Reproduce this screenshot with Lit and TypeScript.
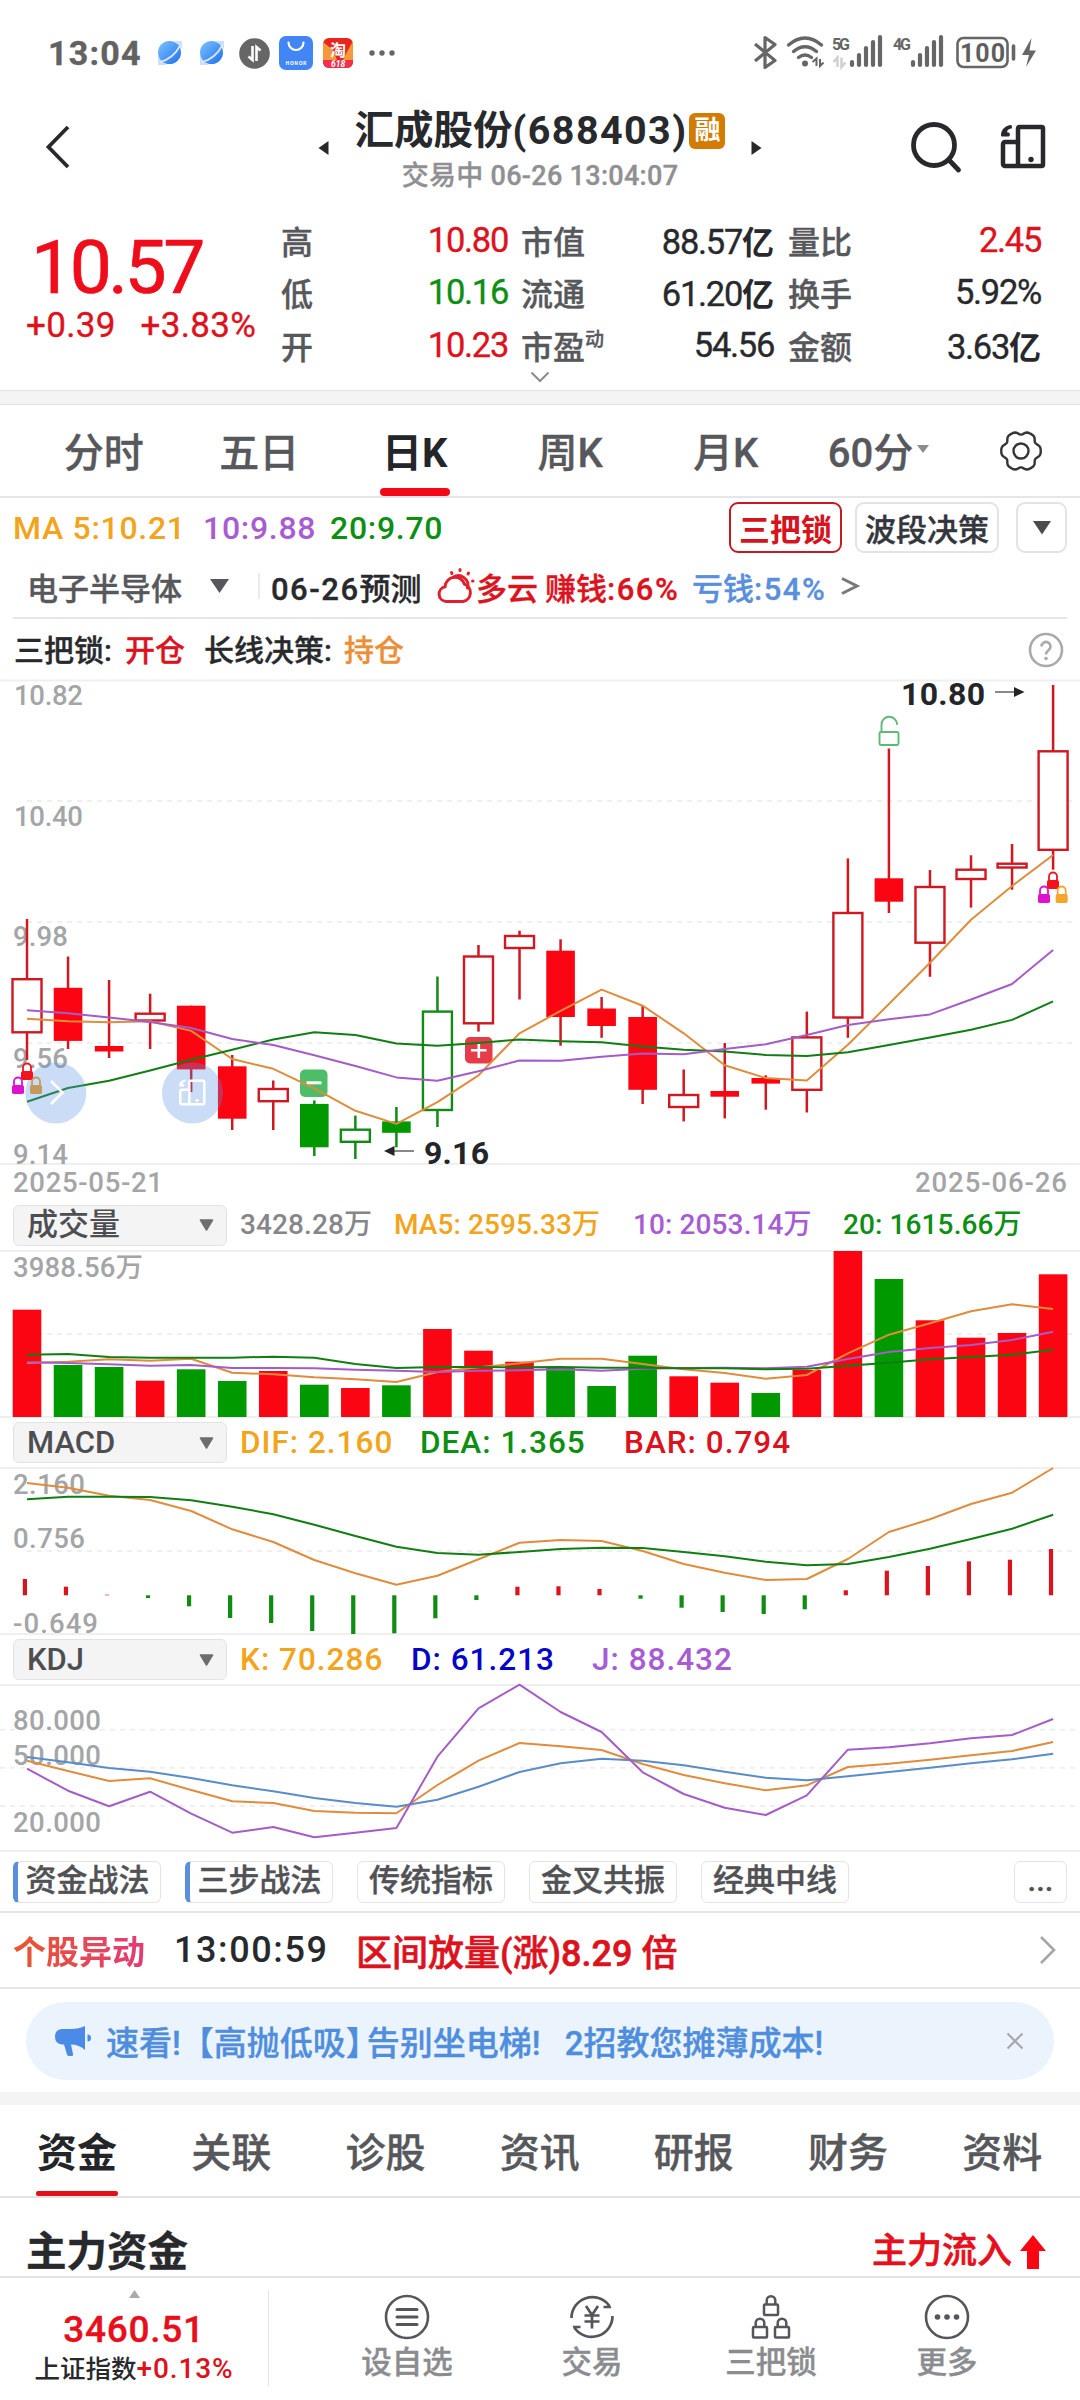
import { LitElement, html, svg, css, nothing } from "lit";
import { customElement, property } from "lit/decorators.js";
import { classMap } from "lit/directives/class-map.js";

const RED = "#fb0512";
const RED_LINE = "#cf1820";
const GREEN = "#009900";
const GREEN_LINE = "#128a14";
const ORANGE = "#e08c3c";
const PURPLE = "#a45cc8";
const MA_GREEN = "#117e14";
const BLUE = "#5a8cca";

const STEP = 41.044;
const cx = (i: number) => 27 + STEP * i;

const line = (ys: number[], color: string) => svg`
  <polyline points=${ys.map((y, i) => `${cx(i).toFixed(1)},${y}`).join(" ")}
    fill="none" stroke=${color} stroke-width="2" stroke-linejoin="round" />`;

const label = (x: number, y: number, w: number, s: string, cls = "axis") => svg`
  <text class=${cls} x=${x} y=${y} textLength=${w}>${s}</text>`;

const rule = (y: number) => svg`<path d="M0 ${y}H1080" stroke="#efefef" stroke-width="2" />`;
const dash = (y: number, x = 27, to = 1077) => svg`
  <path d="M${x} ${y}H${to}" stroke="#efefef" stroke-width="2" stroke-dasharray="5 5" />`;

const chartText = css`
  :host { display: block; }
  svg { display: block; overflow: visible; }
  text { font-family: Roboto, "Noto Sans CJK SC", sans-serif; -webkit-text-stroke: 0; }
  .axis { font-size: 27.5px; font-weight: 500; fill: #a4a5a7; }
  .mark { font-size: 32px; font-weight: 700; fill: #242528; }
`;

/* kind: r/g colour, h hollow, f filled */
type Candle = [string, number, number, number, number];
const candles: Candle[] = [
  ["rh", 919, 979.2, 1032.3, 1060], ["rf", 956.5, 987.8, 1040.9, 1049],
  ["rf", 980, 1046, 1051.5, 1058], ["rh", 993.7, 1013.7, 1020.5, 1049],
  ["rf", 1005.7, 1005.7, 1069.4, 1092], ["rf", 1055, 1066.3, 1118.7, 1130],
  ["rh", 1080.5, 1089, 1101.2, 1130], ["gf", 1100.4, 1103.9, 1147.3, 1156],
  ["gh", 1115.6, 1129.7, 1141.8, 1159], ["gf", 1107, 1121.4, 1132.8, 1147.3],
  ["gh", 976.5, 1011.6, 1110, 1127], ["rh", 945, 956.5, 1023.3, 1031.6],
  ["rh", 930.7, 936, 948, 999.5], ["rf", 939.3, 950.7, 1017, 1045.7],
  ["rf", 997, 1008.5, 1026, 1037.8], ["rf", 1005.7, 1017, 1089.8, 1104],
  ["rh", 1069.5, 1095, 1107, 1121.4], ["rf", 1043, 1091, 1096.7, 1118.4],
  ["rf", 1075.3, 1078, 1083.6, 1109.7], ["rh", 1011.6, 1037.4, 1089.8, 1112.5],
  ["rh", 858.4, 913, 1017.5, 1037.8], ["rf", 748.5, 878.3, 901.7, 913],
  ["rh", 870, 887, 942.7, 976.8], ["rh", 855.3, 869.7, 879, 907.6],
  ["rh", 844, 863.7, 867.5, 889.7], ["rh", 685, 751.3, 849.8, 869.7],
];
const ma5 = [1018.8, 1021.2, 1022.3, 1021.2, 1030.9, 1059, 1068.8, 1088.4, 1110.8, 1123.9, 1102.2, 1075.3, 1033.3,
  1010.9, 989.6, 1005.7, 1033.3, 1065.3, 1078, 1080.5, 1044.7, 1004, 962.7, 919.7, 886, 855];
const ma10 = [1010.2, 1013.3, 1017.5, 1022, 1028, 1039, 1045, 1055.3, 1066, 1077.4, 1080.8, 1071.2, 1060.5,
  1060.8, 1056.7, 1053.6, 1054.3, 1049, 1044.3, 1035, 1025, 1019.2, 1014.4, 999.5, 984, 950];
const ma20 = [1101.8, 1088, 1080.8, 1070.5, 1059.8, 1049.8, 1039.5, 1032.3, 1035, 1043.6, 1045.7, 1043, 1039.5,
  1041.2, 1042.2, 1046.4, 1049.8, 1051.5, 1055, 1056, 1052.2, 1045, 1037.4, 1029.8, 1019.9, 1001.3];

const lock = (x: number, y: number, color: string) => svg`
  <g transform="translate(${x} ${y})">
    <path d="M-4 8V4a4 4 0 0 1 8 0V8" fill="none" stroke=${color} stroke-width="1.8" />
    <rect x="-6" y="7.5" width="12" height="9" rx="1.8" fill=${color} />
  </g>`;

const boardIcon = (color: string, w: number) => svg`
  <g fill="none" stroke=${color} stroke-width=${w} stroke-linejoin="round" stroke-linecap="round">
    <rect x="18" y="3" width="25" height="39" rx="1.5" />
    <path d="M18 18H5a2 2 0 0 0-2 2V40a2 2 0 0 0 2 2H18" />
  </g>
  <circle cx="31" cy="35.5" r="2.7" fill=${color} />
  <path d="M11.5 1C5 1.500 1 6 1 11a1.300 1.300 0 0 0 1.300 1.600H7.500a2.300 2.300 0 0 0 2.300-2.600C9.700 9 9 8.500 7 8.300 7.300 5.800 9 4.600 12.200 4.300Z" fill=${color} />`;

@customElement("price-chart")
export class PriceChart extends LitElement {
  static styles = chartText;
  render() {
    return html`<svg width="1080" height="520" viewBox="0 680 1080 520">
      ${rule(680.5)}${dash(801)}${dash(922)}${dash(1043)}${rule(1164)}
      ${label(14, 705, 69, "10.82")}${label(14, 826, 69, "10.40")}
      ${label(13, 946, 55, "9.98")}${label(13, 1067.500, 55, "9.56")}${label(13, 1163.500, 55, "9.14")}
      ${label(13, 1192, 150, "2025-05-21")}${label(915, 1192, 152, "2025-06-26")}
      ${candles.map(([k, hi, top, bot, lo], i) => {
        const c = k[0] === "r" ? RED_LINE : GREEN_LINE;
        const f = k[0] === "r" ? RED : GREEN;
        const x = cx(i);
        const body = k[1] === "f"
          ? svg`<rect x=${x - 14.300} y=${top} width="28.600" height=${bot - top} fill=${f} />`
          : svg`<rect x=${x - 14.500} y=${top} width="29" height=${bot - top} fill="#fff" stroke=${c} stroke-width="2.400" />`;
        return svg`<path d="M${x} ${hi}V${lo}" stroke=${c} stroke-width="2.500" />${body}`;
      })}
      <rect x="300" y="1069.500" width="27.500" height="27.500" rx="5" fill="#4dbd68" />
      <path d="M306.500 1082.800H321.500" stroke="#fff" stroke-width="3" />
      <rect x="465" y="1037" width="27.500" height="26.500" rx="5" fill="#e63b48" />
      <path d="M471 1050.300H486.500M478.800 1042.500V1058" stroke="#fff" stroke-width="2.600" />
      ${line(ma5, ORANGE)}${line(ma20, MA_GREEN)}${line(ma10, PURPLE)}
      <circle cx="55.800" cy="1093" r="30.500" fill="#5a93e4" fill-opacity=".32" />
      <path d="M51 1081L62.500 1092.500L51 1104" fill="none" stroke="#fff" stroke-width="2.600" />
      <circle cx="192.500" cy="1093" r="30.500" fill="#5a93e4" fill-opacity=".32" />
      <g transform="translate(178.500 1079) scale(.6)">${boardIcon("#fff", 4)}</g>
      ${lock(27, 1063.500, "#f2131c")}${lock(18, 1077.500, "#dc12cf")}${lock(36, 1077.500, "#c49a5c")}
      ${lock(1053, 872.500, "#f2131c")}${lock(1044, 886.500, "#dc12cf")}${lock(1061.700, 886.500, "#f4a52b")}
      <g fill="none" stroke="#5dba76" stroke-width="1.900" stroke-linecap="round">
        <rect x="879.500" y="732" width="19" height="13" rx="1.500" />
        <path d="M881.500 732V725a7.500 7.500 0 0 1 15.500-1" />
      </g>
      ${label(901, 705, 84, "10.80", "mark")}
      <path d="M995 692H1015" stroke="#55565a" stroke-width="1.400" /><path d="M1014 687L1024.500 692L1014 697Z" fill="#242528" />
      ${label(424, 1164, 65, "9.16", "mark")}
      <path d="M414 1151H394" stroke="#55565a" stroke-width="1.400" /><path d="M394.500 1146L384 1151L394.500 1156Z" fill="#242528" />
    </svg>`;
  }
}

const volume: [string, number][] = [
  ["r", 1309.7], ["g", 1365], ["g", 1367], ["r", 1380.7], ["g", 1369.3], ["g", 1381], ["r", 1371], ["g", 1384.7],
  ["r", 1388], ["g", 1385.3], ["r", 1329], ["r", 1350.7], ["r", 1361.7], ["g", 1367.3], ["g", 1386], ["g", 1355.7],
  ["r", 1376.3], ["r", 1382.7], ["g", 1393], ["r", 1370], ["r", 1251], ["g", 1279], ["r", 1320.3], ["r", 1337.7],
  ["r", 1333], ["r", 1274.3],
];
const vol5 = [1363, 1361.7, 1359.3, 1360.7, 1358.7, 1372.7, 1374.3, 1377.3, 1379.3, 1382, 1372, 1367.3, 1363.3,
  1358.7, 1358.7, 1364, 1369.3, 1373, 1378.7, 1375, 1353.3, 1334.7, 1323.3, 1311.3, 1304.3, 1309];
const vol10 = [1362.3, 1363, 1364.3, 1365.7, 1365, 1368, 1368, 1368.3, 1369.7, 1370.7, 1372, 1370.7, 1370.3,
  1369.3, 1370.7, 1368.7, 1368, 1367.7, 1368.3, 1366.7, 1359, 1352, 1348, 1345, 1340, 1331.7];
const vol20 = [1354.7, 1354, 1357, 1357.7, 1357.7, 1357.7, 1356.7, 1357.7, 1364, 1368, 1367, 1367, 1367.3,
  1367, 1367.7, 1367.7, 1368.3, 1368.3, 1369.3, 1368.7, 1365.7, 1362.7, 1359.3, 1357, 1354.7, 1349.7];

@customElement("volume-chart")
export class VolumeChart extends LitElement {
  static styles = chartText;
  render() {
    return html`<svg width="1080" height="168" viewBox="0 1250 1080 168">
      ${rule(1251)}${dash(1334)}${rule(1417)}
      ${label(13, 1277, 130, "3988.56万")}
      ${volume.map(([k, y], i) => svg`<rect x=${cx(i) - 14.300} y=${y} width="28.600" height=${1417 - y}
        fill=${k === "r" ? RED : GREEN} />`)}
      ${line(vol5, ORANGE)}${line(vol10, PURPLE)}${line(vol20, MA_GREEN)}
    </svg>`;
  }
}

const dif = [1483, 1487.7, 1495.7, 1500, 1511, 1529.3, 1542, 1560, 1573.3, 1584.7, 1575.7, 1559.3, 1542.7,
  1540, 1541, 1551, 1564, 1572.7, 1580, 1579, 1559, 1532, 1519.3, 1504, 1492.7, 1468];
const dea = [1499.3, 1496.7, 1496.7, 1497, 1500.3, 1506.7, 1514.3, 1524.7, 1536, 1546.7, 1553, 1554.7, 1552,
  1549, 1547.7, 1548, 1552, 1556.3, 1561.7, 1565.3, 1564, 1557, 1548.7, 1539, 1528.7, 1514.7];
const bar = [1579, 1586.7, 1594.7, 1598, 1606.3, 1618, 1623, 1631, 1634, 1633.3, 1618.3, 1600, 1586.7,
  1586.3, 1589, 1598.7, 1607.7, 1612, 1614, 1609.3, 1590.3, 1570.7, 1566, 1561.3, 1559.7, 1549];
const ZERO = 1595.3;

@customElement("macd-chart")
export class MacdChart extends LitElement {
  static styles = chartText;
  render() {
    return html`<svg width="1080" height="168" viewBox="0 1467 1080 168">
      ${rule(1468)}${dash(1551)}${rule(1634)}
      ${label(13, 1493.500, 72, "2.160")}${label(13, 1547.700, 72, "0.756")}${label(13, 1633, 85, "-0.649")}
      ${bar.map((y, i) => svg`<rect x=${cx(i) - 4.200} y=${Math.min(y, ZERO)} width="4.200"
        height=${Math.abs(y - ZERO)} fill=${y < ZERO ? "#d8141e" : "#108c12"} />`)}
      ${line(dif, ORANGE)}${line(dea, MA_GREEN)}
    </svg>`;
  }
}

const kLine = [1760.7, 1771, 1781, 1778.3, 1790, 1801.3, 1803, 1811, 1812.7, 1813.3, 1785, 1760.7, 1743,
  1746.3, 1750, 1764, 1775, 1783.3, 1790.3, 1785.3, 1767, 1763.7, 1759.7, 1755.3, 1751, 1742];
const dLine = [1757, 1762.3, 1768, 1771.7, 1778, 1785.3, 1791.3, 1798, 1803, 1806.7, 1799.7, 1786.7, 1772,
  1763.3, 1758.7, 1760.7, 1765.3, 1771.7, 1777.7, 1780.3, 1776.3, 1772, 1767.7, 1763.3, 1759.3, 1753.7];
const jLine = [1768.7, 1790.7, 1806.3, 1791.7, 1813.7, 1832.7, 1827, 1837.3, 1832.7, 1828, 1756.7, 1708.3, 1684.7,
  1712, 1732, 1772.3, 1794, 1807.7, 1815, 1795.3, 1749.7, 1747.3, 1743.3, 1738.3, 1735, 1719];

@customElement("kdj-chart")
export class KdjChart extends LitElement {
  static styles = chartText;
  render() {
    return html`<svg width="1080" height="168" viewBox="0 1684 1080 168">
      ${rule(1685)}${dash(1729.700, 0, 1080)}${dash(1767.700, 0, 1080)}${dash(1806, 0, 1080)}${rule(1851)}
      ${label(13, 1729.500, 88, "80.000")}${label(13, 1764.500, 88, "50.000")}${label(13, 1831.700, 88, "20.000")}
      ${line(kLine, ORANGE)}${line(dLine, BLUE)}${line(jLine, PURPLE)}
    </svg>`;
  }
}

type Value = [string, string, number];

@customElement("indicator-head")
export class IndicatorHead extends LitElement {
  @property() name = "";
  @property({ type: Boolean }) small = false;
  @property({ attribute: false }) values: Value[] = [];
  static styles = css`
    :host { display: flex; align-items: center; padding-left: 13px; font-weight: 500; }
    .pick { box-sizing: border-box; width: 214px; height: 41px; border: 1px solid #e3e3e3; border-radius: 6px;
      background: #f4f4f4; display: flex; align-items: center; justify-content: space-between;
      padding: 0 12px 0 13px; color: #4d4e51; font-size: 31px; line-height: 40px; margin-right: 13px; }
    .v { flex: none; font-size: 31.500px; line-height: 40px; white-space: nowrap; letter-spacing: 1px; }
    .small { font-size: 28px; letter-spacing: .1px; }
    .grey { color: #858689; } .orange { color: #f2a41c; } .purple { color: #a85cd2; }
    .green { color: #0c8f12; } .red { color: #dc121d; } .blue { color: #0505c8; }
  `;
  render() {
    return html`
      <div class="pick"><span>${this.name}</span>
        <svg width="15" height="12" viewBox="0 0 15 12"><path d="M1.500 1H13.500L7.500 11Z" fill="#6d6e71" stroke="#6d6e71" stroke-width="1.500" stroke-linejoin="round" /></svg>
      </div>
      ${this.values.map(([t, c, w]) => html`<span class="v ${c} ${this.small ? "small" : ""}" style="width:${w}px">${t}</span>`)}`;
  }
}

const planet = (id: string) => html`<svg width="26" height="26" viewBox="0 0 26 26">
  <defs><linearGradient id=${id} x1="0" y1="0" x2="1" y2="1"><stop offset="0" stop-color="#7cc4ff" /><stop offset="1" stop-color="#1f6ff0" /></linearGradient></defs>
  <path d="M17 1H25V9ZM1 16V25H10Z" fill="#cfdffa" />
  <circle cx="12.500" cy="12.500" r="11.500" fill="url(#${id})" />
  <path d="M3 22Q16 19 23.500 5" fill="none" stroke="#dbe9ff" stroke-width="1.700" />
</svg>`;

const signal = (x: number) => svg`<path d="M${x} 44V47M${x + 7} 37V47M${x + 14} 30V47M${x + 21} 24V47M${x + 28} 19V47"
  stroke="#666" stroke-width="4.200" stroke-linecap="round" transform="translate(0 -2)" />`;

const gearPath = (() => {
  const pts: string[] = [];
  for (let a = 0; a < 360; a += 4) {
    const t = (a * Math.PI) / 180;
    const r = 18.5 + 1.7 * Math.cos(6 * t) - 0.5 * Math.cos(12 * t);
    pts.push(`${(22 + r * Math.cos(t)).toFixed(1)} ${(22 + r * Math.sin(t)).toFixed(1)}`);
  }
  return `M${pts.join("L")}Z`;
})();

const padlock = (x: number, y: number) => svg`<g transform="translate(${x} ${y})">
  <rect x="-7" y="8.500" width="14" height="10.500" rx="1" /><path d="M-4.300 8.500V4.500a4.300 4.300 0 0 1 8.600 0V8.500" /></g>`;

@customElement("app-root")
export class AppRoot extends LitElement {
  static styles = css`
    :host { display: block; width: 1080px; height: 2400px; overflow: hidden; background: #fff; color: #28292c;
      font-family: Roboto, "Noto Sans CJK SC", sans-serif; font-weight: 500; -webkit-text-stroke: .35px; }
    * { box-sizing: border-box; }
    svg { display: block; flex: none; overflow: visible; -webkit-text-stroke: 0; }
    span { white-space: nowrap; flex: none; }
    .row { display: flex; align-items: center; }
    .red { color: #dc121d; } .green { color: #0c8f12; } .orange { color: #f2a41c; } .purple { color: #a85cd2; }

    .status { height: 84px; padding: 22px 0 0 48px; }
    .time { font-size: 34px; font-weight: 700; color: #626262; letter-spacing: 1.200px; width: 109px; }
    .status .gap1 { width: 16px; } .status .gap2 { width: 14px; } .status .right { margin-left: auto; }
    .sig { font: 700 16px Roboto, sans-serif; fill: #666; }
    .batt { font: 700 25px Roboto, sans-serif; fill: #5e5e5e; }
    .tiny { font: 700 5px "Noto Sans CJK SC", sans-serif; fill: #fff; }
    .tao { font: 700 16px "Noto Sans CJK SC", sans-serif; fill: #fff; }
    .promo { font: italic 700 8.500px Roboto, sans-serif; fill: #fff; }

    .header { height: 120px; padding: 0 34px 0 46px; }
    .back { margin-top: 6px; }
    .title { flex: 1; display: flex; justify-content: center; align-items: center; padding: 8px 0 0 99px; }
    .names { display: flex; flex-direction: column; align-items: center; width: 375px; margin: 2px 23px 0 24px; }
    .name { font-size: 39.500px; font-weight: 700; line-height: 52px; -webkit-text-stroke: 0; }
    .code { letter-spacing: 1.400px; }
    .badge { width: 36px; height: 36px; border-radius: 6px; background: #d37c05; color: #fff; font-size: 26px; line-height: 35px;
      text-align: center; margin-left: 2px; }
    .sub { font-size: 27px; line-height: 36px; color: #8f9093; margin-top: 1px; letter-spacing: .3px; }
    .tools { gap: 38px; margin-top: 6px; }

    .quote { height: 186px; position: relative; padding: 10px 39px 0 0; font-weight: 400; align-items: flex-start; }
    .last { width: 281px; padding-left: 26px; }
    .price { font-size: 75px; line-height: 80px; margin: 13px 0 0 5px; color: #f00d1b; letter-spacing: -3.500px; -webkit-text-stroke: .7px; }
    .chg { font-size: 35px; line-height: 40px; letter-spacing: .3px; color: #dc121d; margin-top: -1px; gap: 25px; }
    .grid { display: grid; grid-template-columns: 227px 13px 253px 14px 253px; grid-auto-rows: 52.300px; flex: 1; }
    .cell { display: flex; justify-content: space-between; align-items: center; font-size: 34.500px; letter-spacing: -1.300px; }
    .key { font-size: 32px; font-weight: 500; color: #57585b; letter-spacing: 0; }
    .key sup { font-size: 19px; line-height: 0; vertical-align: 13px; }
    .yi { font-size: 32px; font-weight: 700; letter-spacing: 0; -webkit-text-stroke: 0; }
    .more { position: absolute; left: 530px; top: 167px; }
    .band { height: 15px; background: #f4f4f4; border: solid #e2e2e2; border-width: 1px 0; }

    .periods { height: 93px; border-bottom: 2px solid #e6e6e6; padding: 0 36px 0 26px; }
    .period { width: 155.500px; height: 91px; display: flex; align-items: center; justify-content: center; font-size: 40px; color: #57585b; position: relative; padding-bottom: 2px; }
    .period.on { color: #242528; font-weight: 700; -webkit-text-stroke: 0; }
    .period.on::after { content: ""; position: absolute; bottom: 0; width: 70px; height: 8px; border-radius: 4px; background: #f50815; }
    .period.wide { width: 150px; gap: 4px; }
    .gear { margin-left: auto; margin-right: 1px; }

    .mas { height: 57px; padding: 4px 13px 0 13px; align-items: flex-start; font-size: 32px; }
    .mas .m { line-height: 53px; letter-spacing: .7px; -webkit-text-stroke: 0; }
    .btn { height: 51px; border: 2px solid #e2e3e6; border-radius: 9px; display: flex; align-items: center; justify-content: center;
      font-size: 31px; color: #33363d; }
    .btn.hot { border-color: #c41a23; color: #d5141e; font-weight: 700; -webkit-text-stroke: 0; }
    .forecast { height: 64px; margin: 0 13px; padding-left: 14px; border-bottom: 2px solid #e6e6e6; font-size: 31px; }
    .forecast .n { letter-spacing: 1.500px; }
    .signal { height: 61px; padding: 0 16px 0 14px; font-size: 30px; }
    .signal span { padding-bottom: 3px; }

    .charthead { height: 45px; } .vol { height: 50px; } .mid { height: 49px; }
    indicator-head { -webkit-text-stroke: 0; }

    .chips { height: 61px; padding: 0 13px; border-bottom: 2px solid #e6e6e6; gap: 24px; }
    .chip { width: 148px; height: 42px; border: 1.500px solid #e4e4e4; border-radius: 6px; font-size: 31px; line-height: 38px; text-align: center; color: #515255; }
    .chip.tag { border-left: 5px solid #5a8fdc; text-indent: -3px; }
    .chip.dots { width: 53px; margin-left: auto; }

    .alert { height: 76px; border-bottom: 2px solid #e6e6e6; padding: 0 24px 0 13px; }
    .kind { font-size: 33px; font-weight: 700; width: 161px; background: linear-gradient(90deg, #e8582e 0, #e23a78 134px); -webkit-background-clip: text; background-clip: text; color: transparent; -webkit-text-stroke: 0; }
    .at { font-size: 36px; width: 182px; letter-spacing: 1.600px; -webkit-text-stroke: 0; }
    .what { font-size: 36px; color: #dc121d; -webkit-text-stroke: .6px; }
    .alert svg { margin-left: auto; }

    .ad { margin: 13px 26px 12px; height: 78px; border-radius: 39px; background: #ebf3fc; color: #4f8ddd; font-size: 33px; padding: 0 30px 0 28px; }
    .ad .copy { margin-left: 14px; }
    .ad .close { margin-right: -12px; } .ad .bang { margin-right: 16px; }
    .ad .x { margin-left: auto; }
    .band.flat { border: 0; height: 13px; }

    .tabs { height: 93px; border-bottom: 2px solid #e4e4e4; }
    .tab { width: 154.200px; height: 91px; display: flex; align-items: center; justify-content: center; font-size: 40px; color: #57585b; position: relative; padding-bottom: 2px; }
    .tab.on { color: #242528; font-weight: 700; -webkit-text-stroke: 0; }
    .tab.on::after { content: ""; position: absolute; bottom: 0; width: 82px; height: 5px; border-radius: 2px; background: #e40f1b; }
    .main { height: 80px; padding: 29px 34px 0 26px; justify-content: space-between; align-items: flex-start; border-bottom: 2px solid #e4e4e4; }
    .h { font-size: 40.500px; font-weight: 700; line-height: 50px; }
    .flow { font-size: 35px; line-height: 50px; gap: 8px; color: #e60f1b; -webkit-text-stroke: .6px; }

    .bottom { height: 122px; align-items: flex-start; }
    .index { width: 269px; height: 96px; margin-top: 12px; border-right: 1.500px solid #e4e4e4; display: flex; flex-direction: column; align-items: center; }
    .pt { font-size: 37px; line-height: 40px; color: #e60f1b; letter-spacing: .7px; margin-top: 12px; }
    .ix { font-size: 25.500px; line-height: 32px; margin-top: 3px; -webkit-text-stroke: 0; }
    .ix i { font-style: normal; color: #dc121d; font-size: 28px; letter-spacing: .9px; }
    .nav { display: flex; flex-direction: column; align-items: center; font-size: 30.500px; line-height: 40px; color: #8b8c90; padding-top: 16px; width: 180px; gap: 3px; }
  `;

  render() {
    return html`
      <div class="status row">
        <span class="time">13:04</span>
        ${planet("p1")}<div class="gap1"></div>${planet("p2")}<div class="gap2"></div>
        <svg width="31" height="31" viewBox="0 0 31 31"><circle cx="15.500" cy="15.500" r="15.300" fill="#666" />
          <path d="M13.500 8V22L9.500 18.500M17.500 23V9L21.500 12.500" fill="none" stroke="#fff" stroke-width="2.600" /></svg>
        <div style="width:9px"></div>
        <svg width="34" height="34" viewBox="0 0 34 34"><rect width="34" height="34" rx="7" fill="#4285f4" />
          <path d="M9.500 6.500a7.500 7.500 0 0 0 15 0" fill="none" stroke="#fff" stroke-width="2.200" stroke-linecap="round" />
          <text class="tiny" x="6.500" y="28.500" textLength="21">HONOR</text></svg>
        <div style="width:10px"></div>
        <svg width="30" height="30" viewBox="0 0 30 30"><rect width="30" height="30" rx="6" fill="#e8251f" />
          <path d="M0 4L10 12L14 22H0ZM30 3L24 14L20 22H30Z" fill="#f59a3a" />
          <path d="M0 22H30V24a6 6 0 0 1-6 6H6a6 6 0 0 1-6-6Z" fill="#f0304c" />
          <text class="tao" x="7" y="18">淘</text><text class="promo" x="8" y="29">618</text></svg>
        <svg width="50" height="30" viewBox="0 0 50 30"><g fill="#666"><circle cx="19" cy="15" r="2.700" /><circle cx="29" cy="15" r="2.700" /><circle cx="39" cy="15" r="2.700" /></g></svg>
        <svg class="right" width="330" height="40" viewBox="750 33 330 40">
          <path d="M755 44L775 60.500L765 67.500V37.500L775 44.500L755 61" fill="none" stroke="#666" stroke-width="3.200" stroke-linejoin="round" />
          <g fill="none" stroke="#666" stroke-width="3.400" stroke-linecap="round">
            <path d="M788.500 45Q805 31 821.500 45M793.500 51.500Q805 42 816.500 51.500M798.500 57.500Q805 52.500 811.500 57.500" /></g>
          <circle cx="805" cy="63.500" r="3" fill="#666" />
          <path d="M812.500 62L816.500 58.500V66M820 59V66L823.500 62.500" fill="none" stroke="#666" stroke-width="2" />
          <text class="sig" x="832" y="50" textLength="18">5G</text>
          <path d="M833.500 62L837.500 57.500V67M841.500 57.500V67L845.500 62.500" fill="none" stroke="#cfcfcf" stroke-width="2.400" />
          <g transform="translate(0 20)">${signal(852)}${signal(913)}</g>
          <text class="sig" x="893" y="50" textLength="18">4G</text>
          <rect x="957.500" y="38" width="50" height="29" rx="6" fill="none" stroke="#666" stroke-width="2.600" />
          <text class="batt" x="960" y="61.500" textLength="45">100</text>
          <path d="M1013.500 46V59" stroke="#666" stroke-width="3.600" stroke-linecap="round" />
          <path d="M1031.500 38L1022 55H1029L1026 67L1036 50.500H1029.500Z" fill="#666" />
        </svg>
      </div>

      <div class="header row">
        <svg class="back" width="24" height="44" viewBox="0 0 24 44"><path d="M22 2L2.500 22L22 42" fill="none" stroke="#28292c" stroke-width="3.800" /></svg>
        <div class="title">
          <svg width="11" height="14" viewBox="0 0 11 14"><path d="M10.500 0V14L.5 7Z" fill="#28292c" /></svg>
          <div class="names">
            <div class="row name"><span>汇成股份<span class="code">(688403)</span></span><span class="badge">融</span></div>
            <span class="sub">交易中 06-26 13:04:07</span>
          </div>
          <svg width="11" height="14" viewBox="0 0 11 14"><path d="M.5 0V14L10.500 7Z" fill="#28292c" /></svg>
        </div>
        <div class="row tools">
          <svg width="52" height="52" viewBox="0 0 52 52"><circle cx="24" cy="24" r="20.500" fill="none" stroke="#28292c" stroke-width="4.800" /><path d="M39 39L48.500 49" stroke="#28292c" stroke-width="4.800" stroke-linecap="round" /></svg>
          <svg width="46" height="46" viewBox="0 0 46 46">${boardIcon("#28292c", 4.500)}</svg>
        </div>
      </div>

      <div class="quote row">
        <div class="last"><div class="price">10.57</div><div class="row chg"><span>+0.39</span><span>+3.83%</span></div></div>
        <div class="grid">
          ${this.cell("高", "10.80", "red")}<i></i>${this.cell("市值", "88.57", "", true)}<i></i>${this.cell("量比", "2.45", "red")}
          ${this.cell("低", "10.16", "green")}<i></i>${this.cell("流通", "61.20", "", true)}<i></i>${this.cell("换手", "5.92%", "")}
          ${this.cell("开", "10.23", "red")}<i></i>${this.cell("市盈", "54.56", "", false, "动")}<i></i>${this.cell("金额", "3.63", "", true)}
        </div>
        <svg class="more" width="20" height="12" viewBox="0 0 20 12"><path d="M1.500 1.500L10 10L18.500 1.500" fill="none" stroke="#8b8c90" stroke-width="2" /></svg>
      </div>
      <div class="band"></div>

      <div class="periods row">
        ${["分时", "五日", "日K", "周K", "月K"].map((t) => html`<div class=${classMap({ period: true, on: t === "日K" })}>${t}</div>`)}
        <div class="period wide">60分<svg width="12" height="9" viewBox="0 0 12 9"><path d="M0 0H12L6 8Z" fill="#8b8c90" /></svg></div>
        <svg class="gear" width="44" height="44" viewBox="0 0 44 44"><path d=${gearPath} fill="none" stroke="#343538" stroke-width="2.400" /><circle cx="22" cy="22" r="7.500" fill="none" stroke="#343538" stroke-width="2.400" /></svg>
      </div>

      <div class="mas row">
        <span class="m orange" style="width:190px">MA 5:10.21</span><span class="m purple" style="width:127px">10:9.88</span><span class="m green">20:9.70</span>
        <div class="btn hot" style="width:113px;margin-left:auto;margin-right:13px">三把锁</div>
        <div class="btn" style="width:144px;margin-right:17px">波段决策</div>
        <div class="btn" style="width:51px"><svg width="18" height="14" viewBox="0 0 18 14"><path d="M0 0H18L9 13.500Z" fill="#4b4c50" /></svg></div>
      </div>
      <div class="forecast row">
        <span style="width:183px;color:#57585b">电子半导体</span>
        <svg width="19" height="14" viewBox="0 0 19 14"><path d="M0 0H19L9.500 14Z" fill="#57585b" /></svg>
        <svg width="42" height="26" viewBox="0 0 42 26"><path d="M30 0V26" stroke="#e4e4e4" stroke-width="1.500" /></svg>
        <span style="width:166px"><span class="n">06-26</span>预测</span>
        <svg width="39" height="36" viewBox="0 0 39 36"><g fill="none" stroke="#e0202a" stroke-width="3" stroke-linecap="round">
          <path d="M9 33.500a7.500 7.500 0 0 1-1-14.800 10 10 0 0 1 19.500-2.500 9 9 0 0 1-1.500 17.300Z" />
          <path d="M16 9.500a9.500 9.500 0 0 1 14.500 10.500" />
          <path d="M23 1.500V2.500M14.500 4.500L15 5.500M31.500 5L31 6M36 13H35.500" /></g></svg>
        <span class="red" style="width:69px">多云</span><span class="red" style="width:147px">赚钱<span class="n">:66%</span></span>
        <span style="width:149px;color:#5a8fdc">亏钱<span class="n">:54%</span></span>
        <svg width="18" height="18" viewBox="0 0 18 18"><path d="M1 1.500L16 9L1 16.500" fill="none" stroke="#77787b" stroke-width="3" /></svg>
      </div>
      <div class="signal row">
        <span style="width:111px">三把锁:</span><span class="red" style="width:79px">开仓</span>
        <span style="width:140px">长线决策:</span><span style="color:#ea8f35">持仓</span>
        <svg style="margin-left:auto" width="36" height="36" viewBox="0 0 36 36"><circle cx="18" cy="18" r="16" fill="none" stroke="#a9aaac" stroke-width="2.600" />
          <path d="M13.500 14.500a4.500 4.500 0 1 1 7 3.700Q18 20 18 22.500" fill="none" stroke="#a9aaac" stroke-width="2.600" /><circle cx="18" cy="26.500" r="1.800" fill="#a9aaac" /></svg>
      </div>

      <price-chart></price-chart>
      <indicator-head class="vol" name="成交量" small .values=${[["3428.28万", "grey", 154], ["MA5: 2595.33万", "orange", 239], ["10: 2053.14万", "purple", 210], ["20: 1615.66万", "green", 190]]}></indicator-head>
      <volume-chart></volume-chart>
      <indicator-head class="mid" name="MACD" .values=${[["DIF: 2.160", "orange", 180], ["DEA: 1.365", "green", 204], ["BAR: 0.794", "red", 180]]}></indicator-head>
      <macd-chart></macd-chart>
      <indicator-head class="mid" name="KDJ" .values=${[["K: 70.286", "orange", 171], ["D: 61.213", "blue", 181], ["J: 88.432", "purple", 180]]}></indicator-head>
      <kdj-chart></kdj-chart>

      <div class="chips row">
        ${["资金战法", "三步战法", "传统指标", "金叉共振", "经典中线"].map((t, i) => html`<div class=${classMap({ chip: true, tag: i < 2 })}>${t}</div>`)}
        <div class="chip dots">...</div>
      </div>
      <div class="alert row">
        <span class="kind">个股异动</span><span class="at">13:00:59</span><span class="what">区间放量(涨)8.29 倍</span>
        <svg width="17" height="30" viewBox="0 0 17 30"><path d="M2 2L15 15L2 28" fill="none" stroke="#a5a6a8" stroke-width="2.600" /></svg>
      </div>
      <div class="ad row">
        <svg width="38" height="32" viewBox="0 0 38 32"><path d="M31 1V25Q25 19.500 17 19.500L19 29Q19.500 31 17.500 31H15Q13.500 31 13 29.500L10 19.500H8Q1 19 1 11.500 1 4.500 8 4H17Q25 4 31 1Z" fill="#4a8be8" /><path d="M33.500 9.500a3.500 3.500 0 0 1 0 7Z" fill="#4a8be8" /></svg>
        <span class="copy">速看!【高抛低吸<span class="close">】</span>告别坐电梯<span class="bang">!</span> 2招教您摊薄成本!</span>
        <svg class="x" width="18" height="18" viewBox="0 0 18 18"><path d="M1.500 1.500L16.500 16.500M16.500 1.500L1.500 16.500" stroke="#a5a6a8" stroke-width="2" /></svg>
      </div>
      <div class="band flat"></div>

      <div class="tabs row">
        ${["资金", "关联", "诊股", "资讯", "研报", "财务", "资料"].map((t, i) => html`<div class=${classMap({ tab: true, on: i === 0 })}>${t}</div>`)}
      </div>
      <div class="main row">
        <span class="h">主力资金</span>
        <div class="row flow"><span>主力流入</span><svg width="26" height="34" viewBox="0 0 26 34"><path d="M13 0L26 16H19V34H7V16H0Z" fill="#fb0512" /></svg></div>
      </div>

      <div class="bottom row">
        <div class="index">
          <svg width="11" height="8" viewBox="0 0 11 8"><path d="M5.500 0L11 8H0Z" fill="#a9aaac" /></svg>
          <span class="pt">3460.51</span><span class="ix">上证指数<i>+0.13%</i></span>
        </div>
        <div class="nav" style="margin-left:48px">
          <svg width="46" height="46" viewBox="0 0 46 46" fill="none" stroke="#55565c" stroke-width="2.600"><circle cx="23" cy="23" r="21" /><path d="M13 15.500H33M13 23H33M13 30.500H33" stroke-width="3" stroke-linecap="round" /></svg>设自选</div>
        <div class="nav" style="margin-left:5px">
          <svg width="46" height="46" viewBox="0 0 46 46" fill="none" stroke="#55565c" stroke-width="2.700"><path d="M2.500 24A20.800 20.800 0 0 1 40 11.500L40.500 13H34.500M43.500 22A20.800 20.800 0 0 1 6 34.500L5.500 33H11.500" />
            <path d="M17 12L23 21L29 12M15.500 21.500H30.500M15.500 27.500H30.500M23 21V34.500" /></svg>交易</div>
        <div class="nav" style="margin-left:-1px">
          <svg width="46" height="46" viewBox="0 0 46 46" fill="none" stroke="#55565c" stroke-width="2.500">${padlock(23, 2)}${padlock(12, 24.500)}${padlock(34, 24.500)}</svg>三把锁</div>
        <div class="nav" style="margin-left:-4px">
          <svg width="46" height="46" viewBox="0 0 46 46"><circle cx="23" cy="23" r="21" fill="none" stroke="#55565c" stroke-width="2.600" /><g fill="#55565c"><circle cx="13.500" cy="23" r="2.800" /><circle cx="23" cy="23" r="2.800" /><circle cx="32.500" cy="23" r="2.800" /></g></svg>更多</div>
      </div>`;
  }

  private cell(key: string, value: string, color: string, yi = false, sup = "") {
    return html`<div class="cell"><span class="key">${key}${sup ? html`<sup>${sup}</sup>` : nothing}</span><span class=${color}>${value}${yi ? html`<span class="yi">亿</span>` : nothing}</span></div>`;
  }
}
